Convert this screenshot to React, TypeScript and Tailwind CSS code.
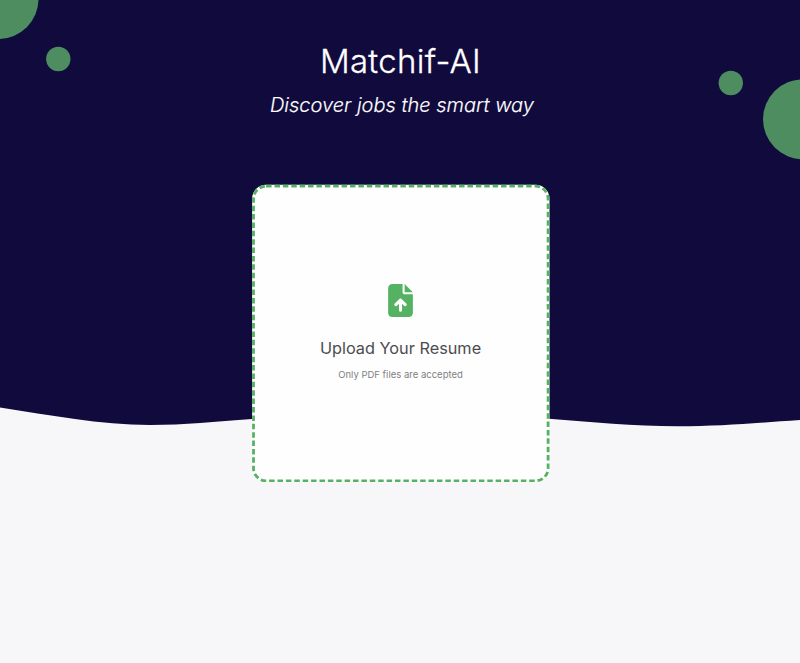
import React from "react";
import { FaFileArrowUp } from "react-icons/fa6";

function Backdrop() {
  return (
    <svg className="absolute inset-0 h-full w-full" viewBox="0 0 800 663" aria-hidden="true">
      <path
        d="M0 0H800V420C755 423 722 426.3 677 426.3C635 426.3 590 422 549 418.8C450 411 350 411 252 419C215 421.5 185 425 150 425C100 425 50 415 0 407.5Z"
        fill="#110a3d"
      />
      <g fill="#4e8d60">
        <circle cx="-1.5" cy="-1" r="40" />
        <circle cx="58.3" cy="59" r="12.2" />
        <circle cx="730.8" cy="83" r="12.2" />
        <circle cx="803" cy="119.3" r="40" />
      </g>
    </svg>
  );
}

function DashedOutline() {
  return (
    <svg className="absolute inset-0 h-full w-full" viewBox="0 0 298 298" fill="none" aria-hidden="true">
      <rect x="0.1" y="0.7" width="297.4" height="297.3" rx="14" fill="#fefefe" />
      <rect
        x="1.5"
        y="2.2"
        width="294.6"
        height="294.6"
        rx="12.6"
        stroke="#56b263"
        strokeWidth="2.8"
        strokeDasharray="5.5 2.89"
      />
    </svg>
  );
}

function UploadCard() {
  return (
    <button
      type="button"
      className="relative mt-[65px] ml-px flex h-[298px] w-[298px] flex-col items-center pt-[100px]"
    >
      <DashedOutline />
      <FaFileArrowUp className="relative h-[33px] w-[25px] text-[#56b263]" />
      <span className="relative mt-[19px] text-[16.3px] leading-6 text-[#4c4c50]">Upload Your Resume</span>
      <span className="relative mt-1.5 text-[9.5px] leading-[17px] text-[#808083]">Only PDF files are accepted</span>
    </button>
  );
}

export default function App() {
  return (
    <main className="relative flex h-[663px] w-full flex-col items-center overflow-hidden bg-[#f7f6f8] font-['Inter',sans-serif]">
      <Backdrop />
      <h1 className="relative mt-10 ml-px text-[33px] leading-[42px] font-light tracking-[0.3px] text-white [-webkit-text-stroke:0.3px_white]">
        Matchif-AI
      </h1>
      <p className="relative mt-[9px] ml-1 text-[20px] leading-7 font-light text-white italic [-webkit-text-stroke:0.15px_white]">
        Discover jobs the smart way
      </p>
      <UploadCard />
    </main>
  );
}
